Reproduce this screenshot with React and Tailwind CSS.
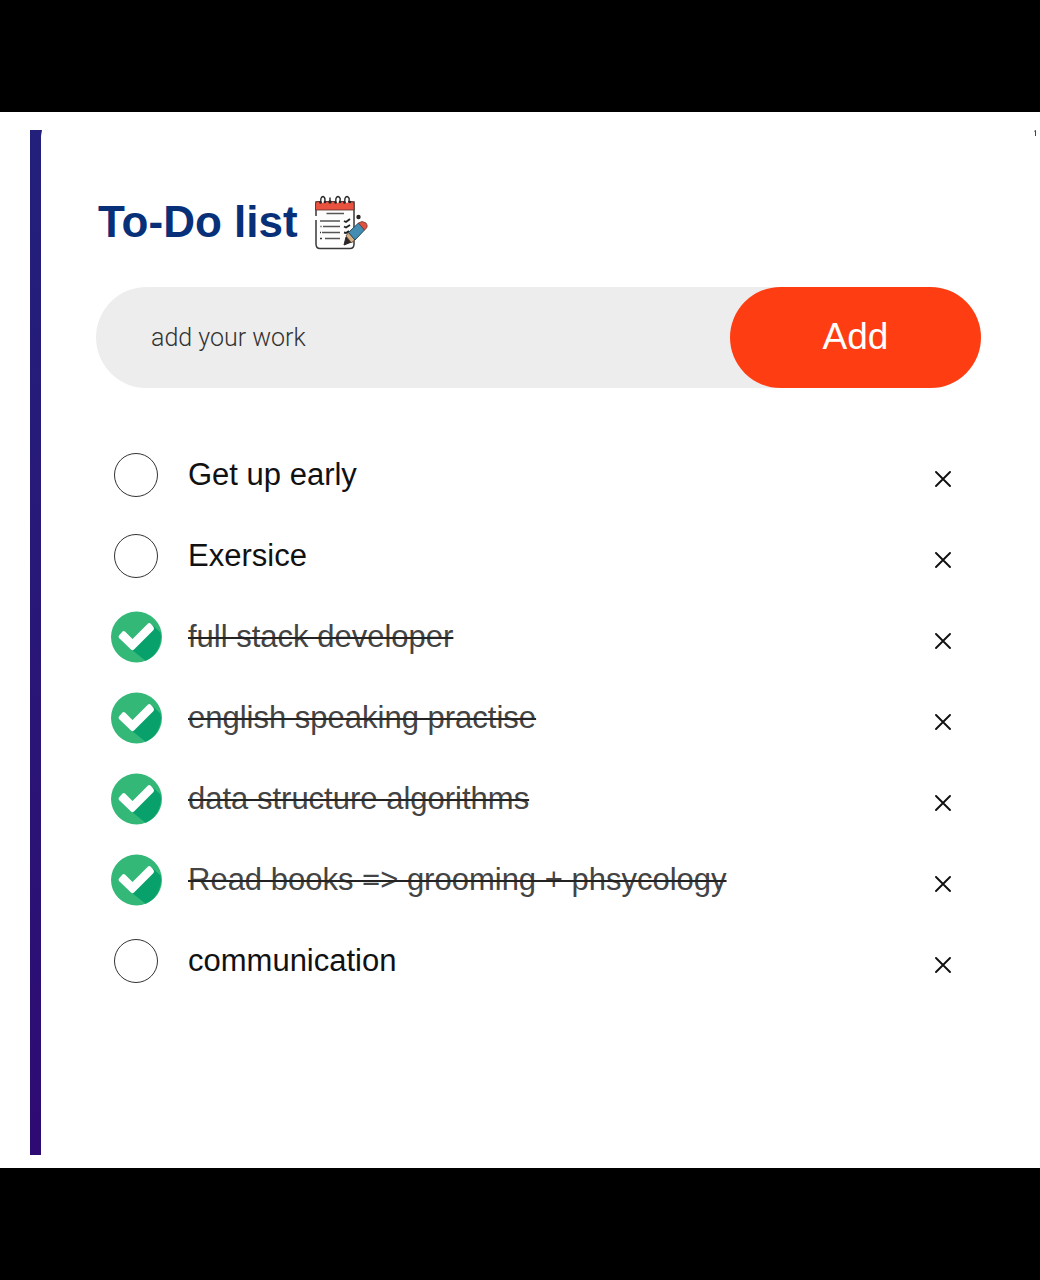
import { useState } from "react";

const initialTasks = [
  { id: 1, text: "Get up early", done: false },
  { id: 2, text: "Exersice", done: false },
  { id: 3, text: "full stack developer", done: true },
  { id: 4, text: "english speaking practise", done: true },
  { id: 5, text: "data structure algorithms", done: true },
  { id: 6, text: "Read books => grooming + phsycology", done: true },
  { id: 7, text: "communication", done: false },
];

function NotepadIcon() {
  return (
    <svg viewBox="0 0 56 56" className="h-14 w-14 shrink-0" fill="none" aria-hidden="true">
      <path d="M3 26V50Q3 54.500 7 54.500H37Q41 54.500 41 50V8H3V22" fill="#fdfdfd" stroke="#3a3838" strokeWidth="1.500" />
      <path d="M2.500 16V10Q2.500 7.500 5 7.500H38.500Q41 7.500 41 10V16Z" fill="#e9523f" stroke="#5b2b28" strokeWidth="0.800" />
      <g stroke="#262425" strokeWidth="1.400" fill="#fff">
        <path d="M8 9Q7 3 10 2.500Q13 3.500 11.500 8.500" />
        <path d="M23 9Q22 3 25 2.500Q28.500 3.500 26.500 8.500" />
        <path d="M32 9Q31 3 34 2.500Q37.500 3.500 35.500 8.500" />
        <path d="M17 3.500V9" />
      </g>
      <g fill="#262425">
        <circle cx="7.500" cy="8.500" r="1.300" />
        <circle cx="12" cy="8" r="1.300" />
        <circle cx="17" cy="8" r="1.700" />
        <circle cx="22.500" cy="8.500" r="1.300" />
        <circle cx="27" cy="8" r="1.300" />
        <circle cx="31.500" cy="8.500" r="1.300" />
        <circle cx="37" cy="8" r="1.300" />
        <circle cx="45.500" cy="23" r="2.200" />
      </g>
      <g stroke="#555" strokeWidth="1.500">
        <path d="M13.500 19.500H31" />
        <path d="M7 27H27" />
        <path d="M10 32.500H27" />
        <path d="M9 38.500H27" />
        <path d="M12 44.500H27" />
      </g>
      <path d="M7.500 32.500H8.500M7 38.500H8M7 44.500H9" stroke="#333" strokeWidth="1.600" />
      <path d="M31 27L33 28L37 25M31 32.500L33 33.500L37 31M31 38.500L33 39L36 37" stroke="#222" strokeWidth="1.900" />
      <path d="M31 51L33 43L38.500 48Z" fill="#292525" stroke="#292525" />
      <path d="M33 42L35.500 38.500L42 45.500L38.500 49Z" fill="#d7ad82" stroke="#4a3730" strokeWidth="0.800" />
      <path d="M35.500 38.500L45.500 29L51.500 36L42 46Z" fill="#448db2" stroke="#24485c" strokeWidth="1" />
      <path d="M45.500 29Q49 26 53 29Q56 33 51.500 36Z" fill="#df5141" stroke="#713630" strokeWidth="0.800" />
    </svg>
  );
}

function TickIcon() {
  return (
    <svg
      viewBox="0 0 52 52"
      className="pointer-events-none col-start-1 row-start-1 hidden h-[52px] w-[52px] peer-checked:block"
      aria-hidden="true"
    >
      <circle cx="26.500" cy="26" r="25.500" fill="#33b878" />
      <path d="M21.500 38.500L43 14.500L50.500 21.500A25.500 25.500 0 0 1 35.500 49.800Z" fill="#08a16c" />
      <path
        d="M15 20.500L22.500 28L38 12.500Q39.500 11.500 41 13L43.500 16Q44.500 17.500 43.500 19L24 38.500Q22.500 40 21 38.500L9 27Q8 25.500 9 24.500L12.500 20.500Q13.500 19.500 15 20.500Z"
        fill="#fff"
      />
    </svg>
  );
}

function Task({ task, onToggle, onRemove }) {
  const id = `task-${task.id}`;
  return (
    <li className="flex h-[81px] items-center">
      <span className="grid h-[52px] w-[52px] shrink-0 place-items-center">
        <input
          id={id}
          type="checkbox"
          checked={task.done}
          onChange={onToggle}
          className="peer col-start-1 row-start-1 h-11 w-11 cursor-pointer appearance-none rounded-full border border-[#333] bg-white checked:opacity-0"
        />
        <TickIcon />
      </span>
      <label
        htmlFor={id}
        className={
          task.done
            ? "ml-[26px] flex-1 cursor-pointer text-[31px] leading-9 text-[#444] line-through decoration-[#222] decoration-2"
            : "ml-[26px] flex-1 cursor-pointer text-[31px] leading-9 text-[#111]"
        }
      >
        {task.text}
      </label>
      <button
        type="button"
        aria-label={`Remove ${task.text}`}
        onClick={onRemove}
        className="mt-2 mr-6 grid h-7 w-7 cursor-pointer place-items-center"
      >
        <svg viewBox="0 0 16 16" className="h-4 w-4" aria-hidden="true">
          <path d="M1 1L15 15M15 1L1 15" stroke="#111" strokeWidth="1.900" strokeLinecap="round" />
        </svg>
      </button>
    </li>
  );
}

export default function App() {
  const [tasks, setTasks] = useState(initialTasks);
  const [draft, setDraft] = useState("");

  const addTask = (event) => {
    event.preventDefault();
    if (!draft.trim()) return;
    setTasks([...tasks, { id: Date.now(), text: draft.trim(), done: false }]);
    setDraft("");
  };

  return (
    <div className="flex min-h-screen bg-black py-28 font-['Liberation_Sans',Arial,sans-serif]">
      <main className="flex flex-1 bg-white">
        <div className="mt-[18px] mb-[13px] ml-[30px] w-3 shrink-0 bg-linear-to-b from-[#22207b] to-[#2e0a73] [clip-path:polygon(0_0,100%_0,11px_6px,11px_100%,0_100%)]" />
        <section className="flex-1 pt-[82px] pr-[59px] pb-20 pl-[54px]">
          <h1 className="flex items-center gap-[15px] pl-0.5 text-[44px] leading-[56px] font-bold text-[#073079]">
            To-Do list
            <NotepadIcon />
          </h1>
          <form onSubmit={addTask} className="mt-[37px] flex h-[101px] rounded-full bg-[#ededed]">
            <input
              type="text"
              aria-label="add your work"
              placeholder="add your work"
              value={draft}
              onChange={(event) => setDraft(event.target.value)}
              className="min-w-0 flex-1 bg-transparent pl-[55px] font-[Roboto,sans-serif] text-[25px] font-light text-[#333] outline-none placeholder:text-[#333]"
            />
            <button
              type="submit"
              className="w-[251px] shrink-0 cursor-pointer rounded-full bg-[#ff3d12] pb-0.5 text-[37px] leading-10 text-white"
            >
              Add
            </button>
          </form>
          <ul className="mt-[46px] pl-[14px]">
            {tasks.map((task) => (
              <Task
                key={task.id}
                task={task}
                onToggle={() => setTasks(tasks.map((t) => (t.id === task.id ? { ...t, done: !t.done } : t)))}
                onRemove={() => setTasks(tasks.filter((t) => t.id !== task.id))}
              />
            ))}
          </ul>
        </section>
        <svg viewBox="0 0 6 10" className="mt-4 -ml-1.5 h-2.5 w-1.5 shrink-0" aria-hidden="true">
          <path d="M0 3L2 2V8H1V4" fill="#444" />
        </svg>
      </main>
    </div>
  );
}
